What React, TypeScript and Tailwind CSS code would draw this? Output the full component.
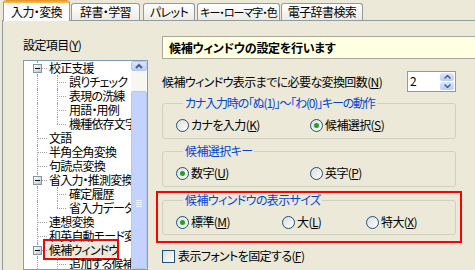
import React from "react";

type TreeItem = {
    label: string;
    level: 0 | 1;
    minus?: boolean;
    last?: boolean;
    selected?: boolean;
};

const tabs = [
    { label: "入力・変換", cls: "w-[67px] ml-0", active: true },
    { label: "辞書・学習", cls: "w-[69px] ml-[1px]" },
    { label: "パレット", cls: "w-[52px] ml-[3px]" },
    { label: "キー・ローマ字・色", cls: "w-[83px] ml-[2px] text-[11px] tracking-[-1px]" },
    { label: "電子辞書検索", cls: "w-[82px] ml-[1px]" },
];

const tree: TreeItem[] = [
    { label: "校正支援", level: 0, minus: true },
    { label: "誤りチェック", level: 1 },
    { label: "表現の洗練", level: 1 },
    { label: "用語・用例", level: 1 },
    { label: "機種依存文字", level: 1, last: true },
    { label: "文語", level: 0 },
    { label: "半角全角変換", level: 0 },
    { label: "句読点変換", level: 0 },
    { label: "省入力・推測変換", level: 0, minus: true },
    { label: "確定履歴", level: 1 },
    { label: "省入力データ", level: 1, last: true },
    { label: "連想変換", level: 0 },
    { label: "和英自動モード変換", level: 0 },
    { label: "候補ウィンドウ", level: 0, minus: true, selected: true },
    { label: "追加する候補", level: 1 },
];

function Radio({ checked }: { checked?: boolean }) {
    return (
        <span className="w-[13px] h-[13px] shrink-0 rounded-full border border-[#1C5180] bg-gradient-to-br from-[#DCDCD7] to-white flex items-center justify-center">
            {checked && <span className="w-[5px] h-[5px] rounded-full bg-[#21A121]" />}
        </span>
    );
}

function Option({ checked, text, mn }: { checked?: boolean; text: string; mn: string }) {
    return (
        <div className="flex items-center gap-[2px] whitespace-nowrap">
            <Radio checked={checked} />
            <span>
                {text}(<span className="underline">{mn}</span>)
            </span>
        </div>
    );
}

function Group({
    title,
    children,
    className,
    legendCls = "",
}: {
    title: string;
    children: React.ReactNode;
    className: string;
    legendCls?: string;
}) {
    return (
        <fieldset className={`w-[294px] border border-[#D0D0BF] rounded-[3px] px-[13px] pt-[8px] ${className}`}>
            <legend className={`ml-[7px] px-[2px] text-[#0046D5] leading-[14px] whitespace-nowrap ${legendCls}`}>{title}</legend>
            <div className="flex h-[14px] items-center">{children}</div>
        </fieldset>
    );
}

function TreeRow({ item }: { item: TreeItem }) {
    return (
        <div className="relative h-[14px] whitespace-nowrap">
            {/* level 0 trunk */}
            <span className="absolute left-[13px] top-0 h-[14px] border-l border-dotted border-[#A0A0A0]" />
            {item.level === 0 ? (
                <span className="absolute left-[13px] top-[7px] w-[10px] border-t border-dotted border-[#A0A0A0]" />
            ) : (
                <>
                    <span
                        className={`absolute left-[33px] top-0 border-l border-dotted border-[#A0A0A0] ${item.last ? "h-[7px]" : "h-[14px]"}`}
                    />
                    <span className="absolute left-[33px] top-[7px] w-[9px] border-t border-dotted border-[#A0A0A0]" />
                </>
            )}
            {item.minus && (
                <span className="absolute left-[9px] top-[3px] w-[9px] h-[9px] border border-[#7898B5] bg-gradient-to-br from-white to-[#C6C6BA] flex items-center justify-center">
                    <span className="w-[5px] h-px bg-black" />
                </span>
            )}
            <span
                className={`absolute top-0 h-[14px] leading-[14px] px-[2px] tracking-[-0.8px] ${item.level === 0 ? "left-[23px]" : "left-[43px]"} ${item.selected ? "bg-[#ECE9D8]" : ""}`}
            >
                {item.label}
            </span>
            {item.selected && (
                <span className="absolute left-[19px] -top-[4px] w-[76px] h-[21px] border-2 border-[#FF0000]" />
            )}
        </div>
    );
}

export default function App() {
    return (
        <div className="w-[475px] h-[270px] overflow-hidden bg-[#ECE9D8] text-[12px] leading-[14px] tracking-[-0.6px] text-black font-['Noto_Sans_CJK_JP',sans-serif] [font-feature-settings:'palt']">
            {/* Tabs */}
            <div className="flex items-end h-[20px] pl-[3px]">
                {tabs.map((t) =>
                    t.active ? (
                        <div
                            key={t.label}
                            className={`${t.cls} relative z-10 h-[21px] -mb-px bg-[#FCFCFE] border-x border-[#919B9C] rounded-t-[3px] flex flex-col whitespace-nowrap`}
                        >
                            <div className="h-[3px] rounded-t-[3px] bg-gradient-to-b from-[#E68B2C] to-[#FFC73C]" />
                            <div className="flex-1 flex items-center justify-center">{t.label}</div>
                        </div>
                    ) : (
                        <div
                            key={t.label}
                            className={`${t.cls} h-[17px] border border-b-0 border-[#919B9C] rounded-t-[3px] bg-gradient-to-b from-white to-[#ECEBE6] flex items-center justify-center whitespace-nowrap`}
                        >
                            {t.label}
                        </div>
                    )
                )}
            </div>

            {/* Page */}
            <div className="ml-[2px] h-[250px] border-t border-l border-[#919B9C] flex">
                {/* Left column */}
                <div className="ml-[20px] w-[125px] flex flex-col">
                    <div className="mt-[17px] h-[14px]">
                        設定項目(<span className="underline">Y</span>)
                    </div>
                    <div className="mt-[8px] h-[220px] bg-white border border-[#7F9DB9] flex overflow-hidden">
                        <div className="flex-1 overflow-hidden">
                            {tree.map((item) => (
                                <TreeRow key={item.label} item={item} />
                            ))}
                        </div>
                        {/* Scrollbar */}
                        <div className="w-[16px] bg-[#F7F7F2] flex flex-col">
                            <div className="h-[16px] rounded-[2px] border border-[#B5C8F1] bg-gradient-to-b from-[#DCE6FD] to-[#BACDF9] flex items-center justify-center">
                                <svg width="8" height="6" viewBox="0 0 8 6">
                                    <path d="M1 5 L4 2 L7 5" fill="none" stroke="#4D6185" strokeWidth="2" />
                                </svg>
                            </div>
                            <div className="mt-[20px] h-[230px] rounded-[2px] border border-[#B5C8F1] bg-[#C3D3FD] flex flex-col items-center pt-[108px] gap-[1px]">
                                {[0, 1, 2, 3].map((i) => (
                                    <span key={i} className="w-[6px] h-px bg-[#EEF4FE]" />
                                ))}
                            </div>
                        </div>
                    </div>
                </div>

                {/* Right column */}
                <div className="ml-[14px] flex-1 flex flex-col">
                    <div className="mt-[15px] h-[23px] border border-[#ACA899] border-r-0 bg-[#FFFFE1] flex items-center pl-[6px] font-bold whitespace-nowrap tracking-[-0.3px]">
                        候補ウィンドウの設定を行います
                    </div>

                    <div className="mt-[12px] w-[294px] flex items-center justify-between h-[21px] whitespace-nowrap">
                        <span>
                            候補ウィンドウ表示までに必要な変換回数(<span className="underline">N</span>)
                        </span>
                        <div className="flex h-[21px] border border-[#7F9DB9] bg-white">
                            <div className="w-[31px] pl-[2px] leading-[17px]">2</div>
                            <div className="w-[16px] flex flex-col gap-px p-px">
                                <div className="flex-1 rounded-[2px] bg-gradient-to-b from-[#DCE6FD] to-[#BACDF9] flex items-center justify-center">
                                    <svg width="7" height="4" viewBox="0 0 7 4">
                                        <path d="M0.5 3.5 L3.5 0.5 L6.5 3.5" fill="none" stroke="#4D6185" strokeWidth="1.5" />
                                    </svg>
                                </div>
                                <div className="flex-1 rounded-[2px] bg-gradient-to-b from-[#DCE6FD] to-[#BACDF9] flex items-center justify-center">
                                    <svg width="7" height="4" viewBox="0 0 7 4">
                                        <path d="M0.5 0.5 L3.5 3.5 L6.5 0.5" fill="none" stroke="#4D6185" strokeWidth="1.5" />
                                    </svg>
                                </div>
                            </div>
                        </div>
                    </div>

                    <Group
                        title="カナ入力時の「ぬ(1)」～「わ(0)」キーの動作"
                        className="mt-[4px] pb-[6px]"
                        legendCls="tracking-[-1.2px]"
                    >
                        <div className="w-[134px]">
                            <Option text="カナを入力" mn="K" />
                        </div>
                        <Option checked text="候補選択" mn="S" />
                    </Group>

                    <Group title="候補選択キー" className="mt-[5px] pb-[6px]">
                        <div className="w-[134px]">
                            <Option checked text="数字" mn="U" />
                        </div>
                        <Option text="英字" mn="P" />
                    </Group>

                    <div className="mt-[4px] -ml-[6px] w-[306px] border-2 border-[#FF0000] pl-[4px] pt-0 pb-[6px]">
                        <Group title="候補ウィンドウの表示サイズ" className="pb-[5px]">
                            <div className="w-[106px]">
                                <Option checked text="標準" mn="M" />
                            </div>
                            <div className="w-[84px]">
                                <Option text="大" mn="L" />
                            </div>
                            <Option text="特大" mn="X" />
                        </Group>
                    </div>

                    <div className="mt-[6px] flex items-center gap-[3px] whitespace-nowrap">
                        <span className="w-[13px] h-[13px] border border-[#1C5180] bg-gradient-to-br from-[#DCDCD7] to-white" />
                        <span>
                            表示フォントを固定する(<span className="underline">F</span>)
                        </span>
                    </div>
                </div>
            </div>
        </div>
    );
}
